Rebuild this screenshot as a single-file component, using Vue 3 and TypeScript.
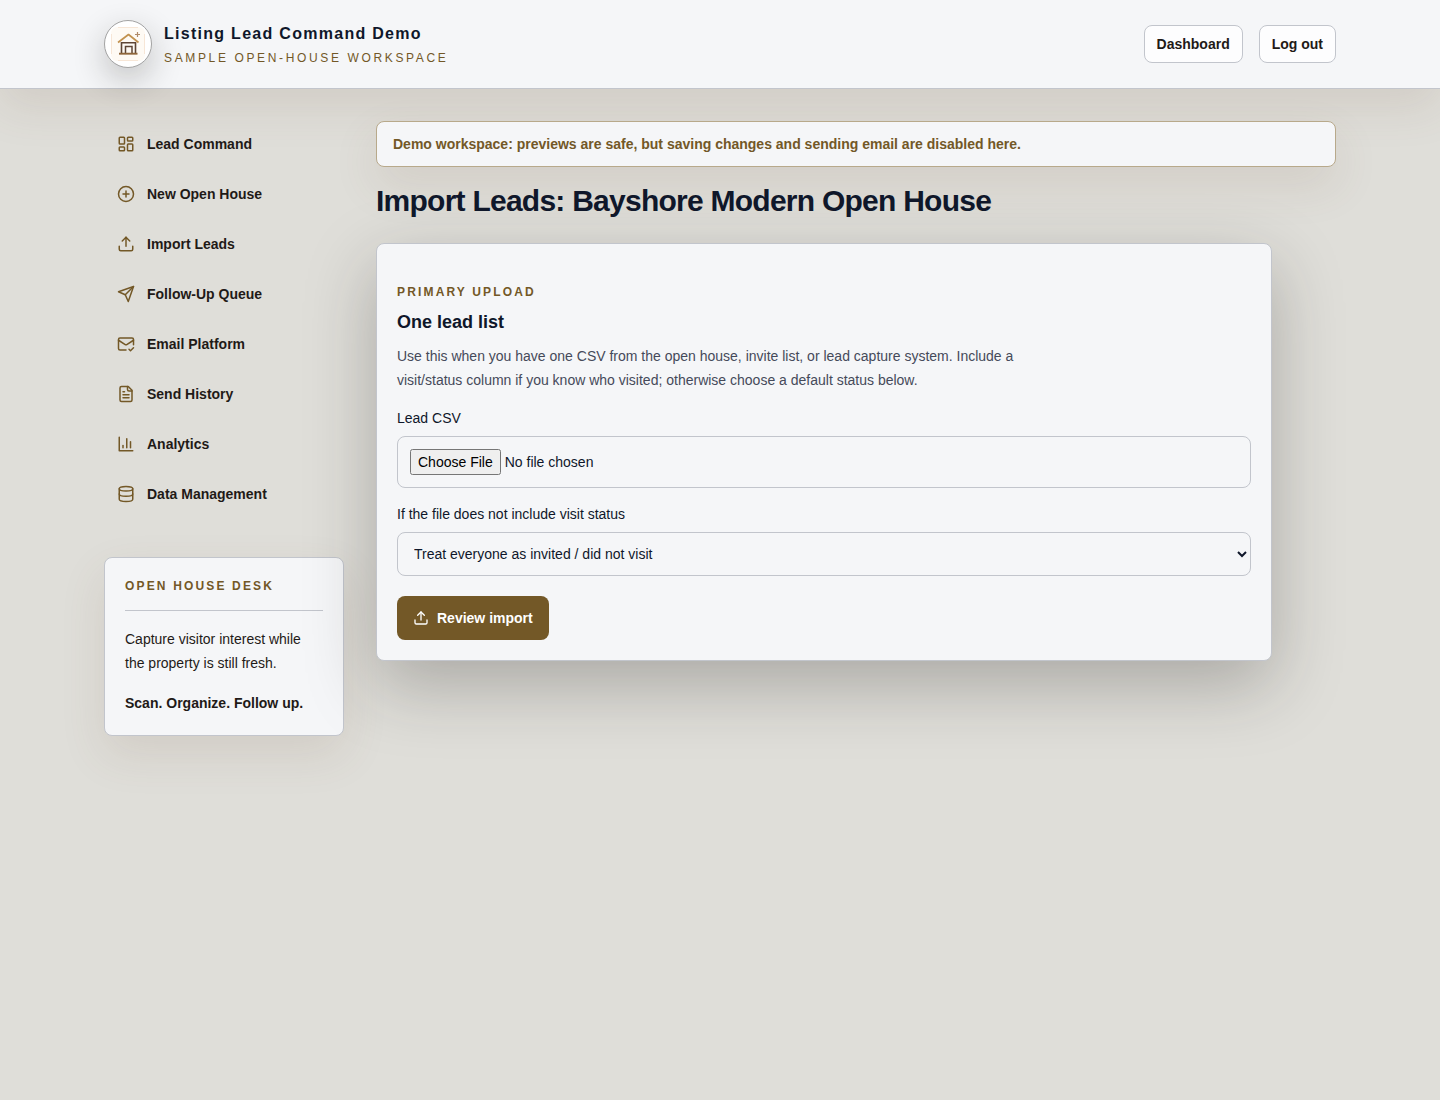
<script setup lang="ts">
import { ref } from 'vue'

interface NavItem {
  label: string
  paths: string[]
}

const uploadPaths: string[] = ['M21 15v4a2 2 0 0 1-2 2H5a2 2 0 0 1-2-2v-4', 'm17 8-5-5-5 5', 'M12 3v12']

const navItems: NavItem[] = [
  {
    label: 'Lead Command',
    paths: [
      'M4 3h5a1 1 0 0 1 1 1v7a1 1 0 0 1-1 1H4a1 1 0 0 1-1-1V4a1 1 0 0 1 1-1z',
      'M15 3h5a1 1 0 0 1 1 1v3a1 1 0 0 1-1 1h-5a1 1 0 0 1-1-1V4a1 1 0 0 1 1-1z',
      'M15 12h5a1 1 0 0 1 1 1v7a1 1 0 0 1-1 1h-5a1 1 0 0 1-1-1v-7a1 1 0 0 1 1-1z',
      'M4 16h5a1 1 0 0 1 1 1v3a1 1 0 0 1-1 1H4a1 1 0 0 1-1-1v-3a1 1 0 0 1 1-1z',
    ],
  },
  { label: 'New Open House', paths: ['M12 2a10 10 0 1 0 0 20 10 10 0 0 0 0-20z', 'M8 12h8', 'M12 8v8'] },
  { label: 'Import Leads', paths: uploadPaths },
  { label: 'Follow-Up Queue', paths: ['m22 2-7 20-4-9-9-4Z', 'M22 2 11 13'] },
  {
    label: 'Email Platform',
    paths: [
      'M22 13V6a2 2 0 0 0-2-2H4a2 2 0 0 0-2 2v12c0 1.1.9 2 2 2h8',
      'm22 7-8.97 5.7a1.94 1.94 0 0 1-2.06 0L2 7',
      'm16 19 2 2 4-4',
    ],
  },
  {
    label: 'Send History',
    paths: [
      'M15 2H6a2 2 0 0 0-2 2v16a2 2 0 0 0 2 2h12a2 2 0 0 0 2-2V7Z',
      'M14 2v4a2 2 0 0 0 2 2h4',
      'M10 9H8',
      'M16 13H8',
      'M16 17H8',
    ],
  },
  { label: 'Analytics', paths: ['M3 3v18h18', 'M18 17V9', 'M13 17V5', 'M8 17v-3'] },
  {
    label: 'Data Management',
    paths: [
      'M12 2c5 0 9 1.340 9 3s-4 3-9 3-9-1.340-9-3 4-3 9-3z',
      'M3 5v14a9 3 0 0 0 18 0V5',
      'M3 12a9 3 0 0 0 18 0',
    ],
  },
]

const defaultStatus = ref<string>('invited')
</script>

<template>
  <div class="page">
    <header class="site-header">
      <div class="header-inner">
        <a class="brand" href="#">
          <span class="brand-mark">
            <svg viewBox="0 0 46 46" width="46" height="46" aria-hidden="true">
              <rect x="6" y="6" width="34" height="34" rx="6" fill="#fefaf4" />
              <path d="M13 6.500h20M13 39.500h20M6.500 13v20M39.500 13v20" stroke="#f7e6d6" fill="none" />
              <path d="M16.500 21v11M30.500 21v11M16 21.700h15" stroke="#5d4535" stroke-width="1.600" fill="none" />
              <path d="M20.500 32v-6.500h6.500V32" stroke="#5d4535" stroke-width="1.500" fill="none" />
              <path d="m13 21.500 10.500-8 10 8" stroke="#c2924f" stroke-width="1.700" stroke-linejoin="round" fill="none" />
              <path d="M14 32.700h18.500" stroke="#8f673c" stroke-width="1.900" fill="none" />
              <path d="M32.500 11v5M30 13.500h5" stroke="#b08a68" stroke-width="1.200" fill="none" />
            </svg>
          </span>
          <span class="brand-text">
            <span class="brand-name">Listing Lead Command Demo</span>
            <span class="brand-sub">Sample open-house workspace</span>
          </span>
        </a>
        <div class="header-actions">
          <a class="header-button" href="#">Dashboard</a>
          <button class="header-button" type="button">Log out</button>
        </div>
      </div>
    </header>

    <div class="layout">
      <aside class="sidebar">
        <nav class="nav" aria-label="Workspace">
          <a v-for="item in navItems" :key="item.label" class="nav-link" href="#">
            <svg class="icon" viewBox="0 0 24 24" width="18" height="18" aria-hidden="true">
              <path v-for="d in item.paths" :key="d" :d="d" />
            </svg>
            <span>{{ item.label }}</span>
          </a>
        </nav>
        <section class="desk">
          <p class="desk-title">Open house desk</p>
          <p class="desk-copy">Capture visitor interest while the property is still fresh.</p>
          <p class="desk-motto">Scan. Organize. Follow up.</p>
        </section>
      </aside>

      <main class="content">
        <div class="notice">Demo workspace: previews are safe, but saving changes and sending email are disabled here.</div>
        <h1>Import Leads: Bayshore Modern Open House</h1>
        <form class="card" @submit.prevent>
          <p class="eyebrow">Primary upload</p>
          <h2>One lead list</h2>
          <p class="description">
            Use this when you have one CSV from the open house, invite list, or lead capture system. Include a
            visit/status column if you know who visited; otherwise choose a default status below.
          </p>
          <div class="field">
            <label for="lead-csv">Lead CSV</label>
            <input id="lead-csv" class="control file" type="file" accept=".csv" />
          </div>
          <div class="field">
            <label for="default-status">If the file does not include visit status</label>
            <select id="default-status" v-model="defaultStatus" class="control select">
              <option value="invited">Treat everyone as invited / did not visit</option>
              <option value="visited">Treat everyone as visited</option>
            </select>
          </div>
          <button class="submit" type="submit">
            <svg class="icon" viewBox="0 0 24 24" width="16" height="16" aria-hidden="true">
              <path v-for="d in uploadPaths" :key="d" :d="d" />
            </svg>
            <span>Review import</span>
          </button>
        </form>
      </main>
    </div>
  </div>
</template>

<style>
body {
  margin: 0;
  background: #dfded9;
}
</style>

<style scoped>
.page {
  min-height: 100vh;
  background: #dfded9;
  color: #0f172a;
  font-family: "Liberation Sans", Arial, sans-serif;
  font-size: 14px;
  line-height: 20px;
}

.page * {
  box-sizing: border-box;
}

p,
h1,
h2 {
  margin: 0;
}

a {
  color: inherit;
  text-decoration: none;
}

.icon {
  flex: none;
  fill: none;
  stroke: currentColor;
  stroke-width: 2;
  stroke-linecap: round;
  stroke-linejoin: round;
}

.site-header {
  background: #f5f6f8;
  border-bottom: 1px solid #c2c5cc;
  box-shadow: 0 18px 45px rgba(112, 86, 60, 0.12);
}

.header-inner {
  display: flex;
  align-items: center;
  justify-content: space-between;
  max-width: 1280px;
  margin: 0 auto;
  padding: 20px 24px;
}

.brand {
  display: flex;
  align-items: center;
  gap: 12px;
}

.brand-mark {
  display: flex;
  width: 48px;
  height: 48px;
  border: 1px solid #a3a3a3;
  border-radius: 50%;
  background: #ffffff;
  box-shadow: 0 12px 32px rgba(31, 29, 26, 0.24);
}

.brand-text {
  display: flex;
  flex-direction: column;
  gap: 4px;
}

.brand-name {
  font-size: 16px;
  line-height: 24px;
  font-weight: 700;
  letter-spacing: 0.08em;
}

.brand-sub {
  font-size: 12px;
  line-height: 16px;
  letter-spacing: 0.22em;
  text-transform: uppercase;
  color: #735827;
}

.header-actions {
  display: flex;
  gap: 16px;
}

.header-button {
  padding: 8px 12px;
  border: 1px solid #c2c5cc;
  border-radius: 8px;
  background: #fdfdfe;
  color: #1f1a17;
  font: inherit;
  font-weight: 700;
  cursor: pointer;
}

.layout {
  display: grid;
  grid-template-columns: 240px minmax(0, 1fr);
  gap: 32px;
  align-items: start;
  max-width: 1280px;
  margin: 0 auto;
  padding: 32px 24px;
}

.sidebar {
  display: flex;
  flex-direction: column;
  gap: 40px;
}

.nav {
  display: flex;
  flex-direction: column;
  gap: 4px;
}

.nav-link {
  display: flex;
  align-items: center;
  gap: 12px;
  padding: 12px;
  border: 1px solid transparent;
  border-radius: 8px;
  color: #1f1a17;
  font-weight: 700;
}

.nav-link .icon {
  color: #735827;
}

.desk {
  padding: 20px;
  border: 1px solid #c2c5cc;
  border-radius: 8px;
  background: #f5f6f8;
  box-shadow: 0 18px 45px rgba(112, 86, 60, 0.12);
  color: #1f1a17;
  line-height: 24px;
}

.desk-title {
  margin-bottom: 16px;
  padding-bottom: 16px;
  border-bottom: 1px solid #c2c5cc;
  color: #735827;
  font-size: 12px;
  line-height: 16px;
  font-weight: 700;
  letter-spacing: 0.18em;
  text-transform: uppercase;
}

.desk-motto {
  margin-top: 16px;
  font-weight: 700;
}

.notice {
  padding: 12px 16px;
  border: 1px solid #b8a98b;
  border-radius: 8px;
  background: #f5f6f8;
  box-shadow: 0 18px 45px rgba(112, 86, 60, 0.12);
  color: #735827;
  font-weight: 700;
}

h1 {
  margin: 16px 0 24px;
  font-size: 30px;
  line-height: 36px;
  letter-spacing: -0.025em;
}

.card {
  max-width: 896px;
  padding: 40px 20px 20px;
  border: 1px solid #c2c5cc;
  border-radius: 8px;
  background: #f5f6f8;
  box-shadow: 0 24px 70px rgba(31, 29, 26, 0.28);
}

.eyebrow {
  color: #735827;
  font-size: 12px;
  line-height: 16px;
  font-weight: 700;
  letter-spacing: 0.18em;
  text-transform: uppercase;
}

h2 {
  margin: 8px 0;
  font-size: 18px;
  line-height: 28px;
}

.description {
  max-width: 672px;
  color: #454a5a;
  line-height: 24px;
}

.field {
  display: flex;
  flex-direction: column;
  gap: 8px;
  margin-top: 16px;
}

.control {
  width: 100%;
  border: 1px solid #c2c5cc;
  border-radius: 8px;
  background: #f5f6f8;
  color: #0f172a;
  font: inherit;
}

.file {
  padding: 12px;
}

.file::file-selector-button {
  padding: 3px 6px;
}

.select {
  height: 44px;
  padding: 0 12px;
}

.submit {
  display: flex;
  align-items: center;
  gap: 8px;
  min-height: 44px;
  margin-top: 20px;
  padding: 0 16px;
  border: 0;
  border-radius: 8px;
  background: #735827;
  color: #ffffff;
  font: inherit;
  font-weight: 700;
  cursor: pointer;
}
</style>
